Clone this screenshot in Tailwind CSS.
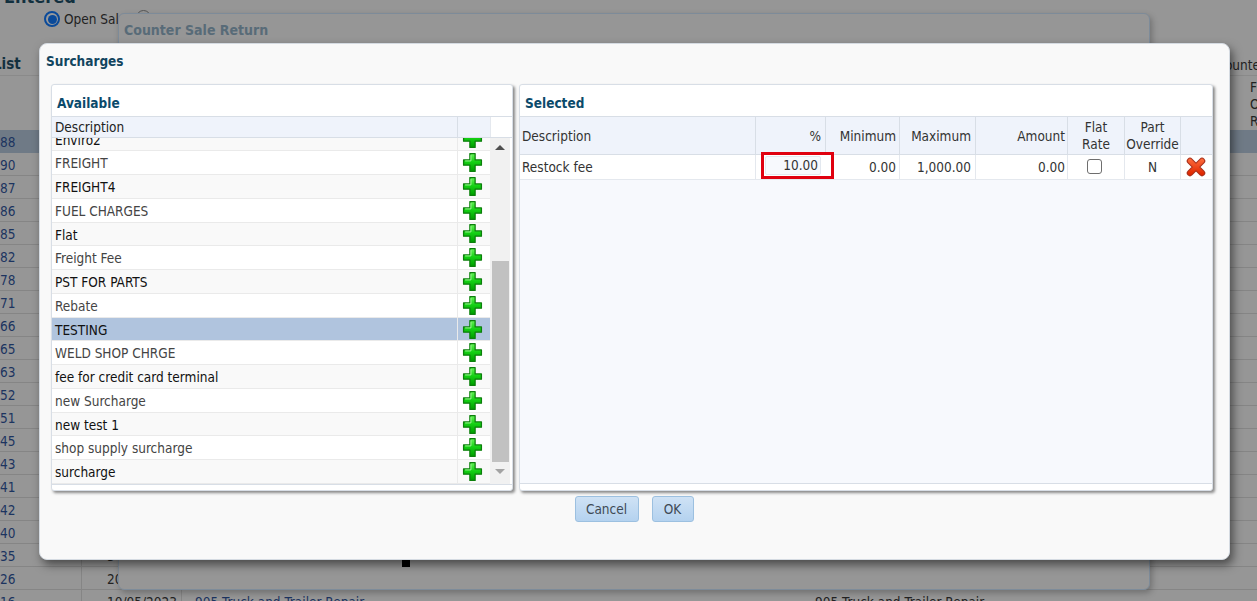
<!DOCTYPE html>
<html lang="en">
<head>
  <meta charset="UTF-8" />
  <title>Surcharges</title>
  <script src="https://cdn.jsdelivr.net/npm/@tailwindcss/browser@4"></script>
</head>
<body class="h-[601px] w-[1257px] overflow-hidden relative bg-[#969696] text-[13.5px] text-[#1f1f1f] font-['DejaVu_Sans',sans-serif] [font-stretch:condensed]">

  <!-- icons -->
  <svg class="absolute w-0 h-0">
    <defs>
      <linearGradient id="plusFill" gradientUnits="userSpaceOnUse" x1="0" y1="1" x2="0" y2="18">
        <stop offset="0" stop-color="#6cf55c"/>
        <stop offset="0.5" stop-color="#14d014"/>
        <stop offset="1" stop-color="#00a000"/>
      </linearGradient>
      <linearGradient id="xFill" gradientUnits="userSpaceOnUse" x1="0" y1="1" x2="0" y2="17">
        <stop offset="0" stop-color="#ff7040"/>
        <stop offset="1" stop-color="#e02800"/>
      </linearGradient>
      <symbol id="plus" viewBox="0 0 20 20">
        <path d="M7.500 1.500h5v6h6v5h-6v6h-5v-6h-6v-5h6z" fill="url(#plusFill)" stroke="#0c7f0c" stroke-width="1.200" stroke-linejoin="round"/>
        <path d="M8.500 3v5.500H3" fill="none" stroke="#b5ffa8" stroke-width="0.800"/>
      </symbol>
      <symbol id="cross" viewBox="0 0 20 20">
        <path d="M4 4 16 16M16 4 4 16" stroke="#a8301c" stroke-width="6.500" stroke-linecap="round"/>
        <path d="M4 4 16 16M16 4 4 16" stroke="url(#xFill)" stroke-width="4.500" stroke-linecap="round"/>
      </symbol>
    </defs>
  </svg>

  <!-- page behind the dialogs -->
  <div class="h-[76px] border-b border-[#8a8a8a] relative">
    <div class="absolute left-[4px] top-[-17px] text-[18px] font-bold text-[#12303f]">Entered</div>
    <div class="absolute left-[44px] top-[9px] flex items-center gap-[4px] text-[#222]">
      <span class="w-[16px] h-[16px] rounded-full border-2 border-[#0a4a9a] bg-[#9a9a9a] flex items-center justify-center"><span class="w-[9px] h-[9px] rounded-full bg-[#0a4a9a]"></span></span>
      <span>Open Sales</span>
    </div>
    <span class="absolute left-[136px] top-[10px] w-[15px] h-[15px] rounded-full border border-[#555]"></span>
    <div class="absolute left-[-7px] top-[53px] text-[15px] font-bold text-[#12303f]">List</div>
    <div class="absolute right-[-8px] top-[55px] text-[#222]">Counter</div>
  </div>
  <div class="h-[54px] relative">
    <div class="absolute left-[1250px] top-[3px] text-[#222] leading-[17px]">F<br>O<br>R</div>
  </div>
  <div id="backRows"></div>

  <!-- Counter Sale Return window -->
  <div class="absolute left-[118px] top-[13px] w-[1032px] h-[577px] rounded-md border border-[#7d8b99] bg-[#969696] shadow-[2px_3px_6px_rgba(0,0,0,0.25)]">
    <div class="pl-[5px] pt-[6px] font-bold text-[14px] text-[#586b78]">Counter Sale Return</div>
    <div class="absolute left-[283px] top-[546px] w-[8px] h-[7px] bg-black"></div>
  </div>

  <!-- Surcharges dialog -->
  <div class="absolute left-[39px] top-[43px] w-[1191px] h-[517px] rounded-lg border border-[#d5dbe2] bg-[#f9f9f9] shadow-[3px_5px_10px_rgba(0,0,0,0.5)] flex flex-col">
    <div class="pl-[6px] pt-[7px] h-[40px] font-bold text-[#12455f]">Surcharges</div>

    <div class="flex gap-[6px] pl-[11px]">
      <!-- Available -->
      <div class="w-[462px] h-[407px] bg-white rounded-[3px] border border-[#d8dee6] shadow-[2px_2px_3px_rgba(0,0,0,0.45)] flex flex-col">
        <div class="h-[31px] pl-[5px] pt-[9px] font-bold leading-[18px] text-[#0b4a6b]">Available</div>
        <div class="flex h-[22px] border-y border-[#d8dee6]">
          <div class="w-[405px] bg-[#eff3fb] pl-[3px] leading-[20px] text-[#222]">Description</div>
          <div class="w-[33px] bg-[#eff3fb] border-l border-[#d8dee6]"></div>
          <div class="flex-1 border-l border-[#e4e8ee]"></div>
        </div>
        <div class="flex h-[347px] border-b border-[#d8dee6]">
          <div class="w-[438px] h-full overflow-hidden">
            <div id="availableRows" class="mt-[-10.5px]"></div>
          </div>
          <!-- scrollbar -->
          <div class="w-[20px] bg-[#f1f1f1] flex flex-col items-center">
            <div class="h-[123px] pt-[7px]"><div class="w-0 h-0 border-x-[5px] border-x-transparent border-b-[5px] border-b-[#505050]"></div></div>
            <div class="w-[17px] h-[201px] bg-[#c1c1c1]"></div>
            <div class="pt-[7px]"><div class="w-0 h-0 border-x-[5px] border-x-transparent border-t-[5px] border-t-[#a3a3a3]"></div></div>
          </div>
        </div>
      </div>

      <!-- Selected -->
      <div class="w-[694px] h-[407px] bg-white rounded-[3px] border border-[#d8dee6] shadow-[2px_2px_3px_rgba(0,0,0,0.45)] flex flex-col">
        <div class="h-[31px] pl-[5px] pt-[9px] font-bold leading-[18px] text-[#0b4a6b]">Selected</div>
        <div class="h-[368px] bg-[#f7f9fd] border-b border-[#d8dee6]">
          <div class="grid grid-cols-[235px_70px_74px_76px_92px_57px_56px_32px] text-[#333]">
            <div class="h-[39px] bg-[#eff3fb] border-y border-[#d8dee6] pl-[2px] pt-[1px] flex items-center">Description</div>
            <div class="h-[39px] bg-[#eff3fb] border-y border-l border-[#d8dee6] pr-[4px] pt-[1px] flex items-center justify-end">%</div>
            <div class="h-[39px] bg-[#eff3fb] border-y border-l border-[#d8dee6] pr-[3px] pt-[1px] flex items-center justify-end">Minimum</div>
            <div class="h-[39px] bg-[#eff3fb] border-y border-l border-[#d8dee6] pr-[4px] pt-[1px] flex items-center justify-end">Maximum</div>
            <div class="h-[39px] bg-[#eff3fb] border-y border-l border-[#d8dee6] pr-[2px] pt-[1px] flex items-center justify-end">Amount</div>
            <div class="h-[39px] bg-[#eff3fb] border-y border-l border-[#d8dee6] flex items-center justify-center text-center leading-[17px]">Flat<br>Rate</div>
            <div class="h-[39px] bg-[#eff3fb] border-y border-l border-[#d8dee6] flex items-center justify-center text-center leading-[17px]">Part<br>Override</div>
            <div class="h-[39px] bg-[#eff3fb] border-y border-l border-[#d8dee6]"></div>

            <div class="h-[25px] bg-white border-b border-[#e4e8ee] pl-[2px] flex items-center">Restock fee</div>
            <div class="h-[25px] bg-white border-b border-l border-[#e4e8ee] relative">
              <div class="absolute left-[5px] top-[-3px] w-[73px] h-[27px] border-[3px] border-[#e0000f] bg-white pl-[1px] pt-[1px]">
                <div class="w-[56px] h-[19px] bg-[#f7f9fd] border border-[#e3e8ef] rounded-[2px] text-right pr-[2px] leading-[17px]">10.00</div>
              </div>
            </div>
            <div class="h-[25px] bg-white border-b border-l border-[#e4e8ee] pr-[3px] flex items-center justify-end">0.00</div>
            <div class="h-[25px] bg-white border-b border-l border-[#e4e8ee] pr-[4px] flex items-center justify-end">1,000.00</div>
            <div class="h-[25px] bg-white border-b border-l border-[#e4e8ee] pr-[2px] flex items-center justify-end">0.00</div>
            <div class="h-[25px] bg-white border-b border-l border-[#e4e8ee] pr-[4px] pb-[2px] flex items-center justify-center"><span class="w-[15px] h-[15px] rounded-[3px] border border-[#6e6e6e] bg-white"></span></div>
            <div class="h-[25px] bg-white border-b border-l border-[#e4e8ee] flex items-center justify-center">N</div>
            <div class="h-[25px] bg-white border-b border-l border-[#e4e8ee] pr-[2px] flex items-center justify-center"><svg class="w-[20px] h-[20px]"><use href="#cross"/></svg></div>
          </div>
        </div>
      </div>
    </div>

    <div class="flex justify-center gap-[13px] pt-[5px] pr-[1px]">
      <button class="w-[64px] h-[26px] rounded-[3px] border border-[#9cc0e0] bg-gradient-to-b from-[#cfe2f5] to-[#b4d2ef] text-[#3f4a55]">Cancel</button>
      <button class="w-[42px] h-[26px] rounded-[3px] border border-[#9cc0e0] bg-gradient-to-b from-[#cfe2f5] to-[#b4d2ef] text-[#3f4a55]">OK</button>
    </div>
  </div>

  <script>
    const backRows = [['88'],['90'],['87'],['86'],['85'],['82'],['78'],['71'],['66'],['65'],['63'],['52'],['51'],['45'],['43'],['41'],['42'],['40'],['35','3'],['26','20'],['16','10/05/2023']];
    document.getElementById('backRows').innerHTML = backRows.map(([n, date], i) => `
      <div class="h-[23px] flex border-b ${i === 0 ? 'bg-[#6f7a86] border-[#6f7a86]' : 'border-[#858585]'}">
        <div class="w-[82px] border-r border-[#858585] leading-[24px] text-[#1c3460]">${n}</div>
        <div class="w-[100px] border-r border-[#858585] pl-[25px] leading-[24px] text-[#222]">${date || ''}</div>
        ${n === '16' ? '<div class="pl-[13px] leading-[24px] text-[#1c3460]">905 Truck and Trailer Repair</div><div class="absolute left-[815px] leading-[24px] text-[#222]">905 Truck and Trailer Repair</div>' : ''}
      </div>`).join('');

    const available = ['Enviro2','FREIGHT','FREIGHT4','FUEL CHARGES','Flat','Freight Fee','PST FOR PARTS','Rebate','TESTING','WELD SHOP CHRGE','fee for credit card terminal','new Surcharge','new test 1','shop supply surcharge','surcharge'];
    document.getElementById('availableRows').innerHTML = available.map((name, i) => {
      const selected = name === 'TESTING';
      const rowClass = selected ? 'bg-[#b0c4de] text-[#111]' : i % 2 === 0 ? 'bg-[#f9f9f9] text-[#111]' : 'bg-white text-[#444]';
      return `
      <div class="h-[23.77px] flex border-b border-[#eaeaea] ${rowClass}">
        <div class="w-[405px] pl-[3px] leading-[25px]">${name}</div>
        <div class="w-[33px] border-l border-[#eaeaea] pr-[4px] flex items-center justify-center"><svg class="w-[21px] h-[21px]"><use href="#plus"/></svg></div>
      </div>`;
    }).join('');
  </script>
</body>
</html>
